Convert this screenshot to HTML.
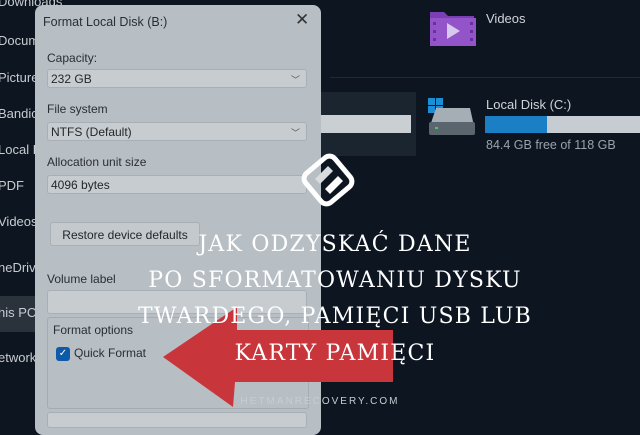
<!DOCTYPE html>
<html><head><meta charset="utf-8"><style>
*{margin:0;padding:0;box-sizing:border-box}
body{width:640px;height:428px;overflow:hidden;background:#0c1520;position:relative;font-family:"Liberation Sans",sans-serif}
.a{position:absolute}
.nav{color:#c8ccd0;font-size:13px;left:-2px}
.dlg{left:35px;top:5px;width:286px;height:430px;background:#b7bec4;border-radius:8px}
.dlg .t{font-size:12px;color:#2a2f33;white-space:nowrap}
.box{position:absolute;left:12px;width:260px;height:19px;background:#c6ccd0;border:1px solid #a9b0b5;border-radius:3px;font-size:12px;color:#22272b;padding:2px 3px}
.chev{position:absolute;right:6px;top:3px;font-size:9px;color:#555}
.title{color:#fff;font-family:"DejaVu Serif","Liberation Serif",serif;font-size:22px;letter-spacing:1.2px;text-align:center;width:640px;left:15px;line-height:36px;white-space:nowrap}
</style></head><body>
<div class="a nav" style="top:-6px">Downloads</div>
<div class="a nav" style="top:33px">Docum</div>
<div class="a nav" style="top:70px">Pictures</div>
<div class="a nav" style="top:106px">Bandic</div>
<div class="a nav" style="top:142px">Local D</div>
<div class="a nav" style="top:178px">PDF</div>
<div class="a nav" style="top:214px">Videos</div>
<div class="a nav" style="top:260px">neDrive</div>
<div class="a" style="left:0;top:296px;width:36px;height:36px;background:#2a323c"></div>
<div class="a nav" style="top:305px">his PC</div>
<div class="a nav" style="top:350px">etwork</div>

<svg class="a" style="left:428px;top:8px" width="50" height="40" viewBox="0 0 50 40"><path d="M2 4h14l4 4h26v30H2z" fill="#7a3fb3"/><rect x="2" y="10" width="46" height="28" fill="#9254c8"/><path d="M19 15l13 8-13 8z" fill="#d9c8ee"/><g fill="#6a2fa0"><rect x="5" y="14" width="3" height="3"/><rect x="5" y="22" width="3" height="3"/><rect x="5" y="30" width="3" height="3"/><rect x="42" y="14" width="3" height="3"/><rect x="42" y="22" width="3" height="3"/><rect x="42" y="30" width="3" height="3"/></g></svg>
<div class="a" style="left:486px;top:11px;color:#d0d4d8;font-size:13px">Videos</div>
<div class="a" style="left:330px;top:77px;width:310px;height:1px;background:#1f2a35"></div>
<div class="a" style="left:321px;top:92px;width:95px;height:64px;background:#1b252f"></div>
<div class="a" style="left:321px;top:115px;width:90px;height:18px;background:#c9cfd3"></div>
<svg class="a" style="left:426px;top:96px" width="52" height="42"><rect x="2" y="2" width="7" height="7" fill="#1a8fd6"/><rect x="10" y="2" width="7" height="7" fill="#1a8fd6"/><rect x="2" y="10" width="7" height="7" fill="#1a8fd6"/><rect x="10" y="10" width="7" height="7" fill="#1a8fd6"/><path d="M4 30l6-18h34l4 18z" fill="#a5aeb5"/><rect x="3" y="26" width="46" height="13" rx="2" fill="#5b656d"/><rect x="9" y="31" width="3" height="2" fill="#3fcf5a"/></svg>
<div class="a" style="left:486px;top:97px;color:#d0d4d8;font-size:13px">Local Disk (C:)</div>
<div class="a" style="left:485px;top:116px;width:155px;height:17px;background:#c6ccd1"></div>
<div class="a" style="left:485px;top:116px;width:62px;height:17px;background:#1a7fc4"></div>
<div class="a" style="left:486px;top:138px;color:#9aa3ab;font-size:12.5px">84.4 GB free of 118 GB</div>

<div class="a dlg">
<div class="a t" style="left:8px;top:10px;font-size:12.5px">Format Local Disk (B:)</div>
<div class="a" style="left:260px;top:5px;font-size:17px;color:#333">✕</div>
<div class="a t" style="left:12px;top:46px">Capacity:</div>
<div class="box" style="top:64px">232 GB<span class="chev">﹀</span></div>
<div class="a t" style="left:12px;top:97px">File system</div>
<div class="box" style="top:117px">NTFS (Default)<span class="chev">﹀</span></div>
<div class="a t" style="left:12px;top:150px">Allocation unit size</div>
<div class="box" style="top:170px">4096 bytes</div>
<div class="a" style="left:15px;top:217px;width:150px;height:24px;background:#c3c9cd;border:1px solid #a9b0b5;border-radius:3px;font-size:12px;color:#22272b;padding:5px 0;text-align:center;white-space:nowrap">Restore device defaults</div>
<div class="a t" style="left:12px;top:267px">Volume label</div>
<div class="box" style="top:285px;height:24px"></div>
<div class="a" style="left:12px;top:312px;width:262px;height:92px;border:1px solid #a5acb1;border-radius:3px"></div>
<div class="a t" style="left:18px;top:318px">Format options</div>
<div class="a" style="left:21px;top:342px;width:14px;height:14px;background:#0d5aa8;border-radius:3px;color:#fff;font-size:10px;text-align:center;line-height:14px">✓</div>
<div class="a t" style="left:39px;top:341px">Quick Format</div>
<div class="box" style="top:407px;height:16px"></div>
</div>

<svg class="a" style="left:0;top:0" width="640" height="428"><path d="M163 357L237 307L237 330L393 330L393 382L235 382L233 407Z" fill="#c8353b"/></svg>

<svg class="a" style="left:296px;top:147px" width="64" height="66" viewBox="0 0 64 66"><g transform="rotate(-40 32 33)"><rect x="13" y="14" width="38" height="38" rx="7" fill="none" stroke="#fff" stroke-width="5"/></g><path d="M19 32l13-13 5 5-13 13z" fill="#d8dcdf"/><path d="M29 42l13-13 5 5-13 13z" fill="#fff"/></svg>

<div class="a title" style="top:227px">JAK ODZYSKAĆ DANE</div>
<div class="a title" style="top:263px">PO SFORMATOWANIU DYSKU</div>
<div class="a title" style="top:299px">TWARDEGO, PAMIĘCI USB LUB</div>
<div class="a title" style="top:336px">KARTY PAMIĘCI</div>
<div class="a" style="left:0;width:640px;text-align:center;top:396px;color:#c8cdd2;font-size:10px;letter-spacing:2px">HETMANRECOVERY.COM</div>
</body></html>
